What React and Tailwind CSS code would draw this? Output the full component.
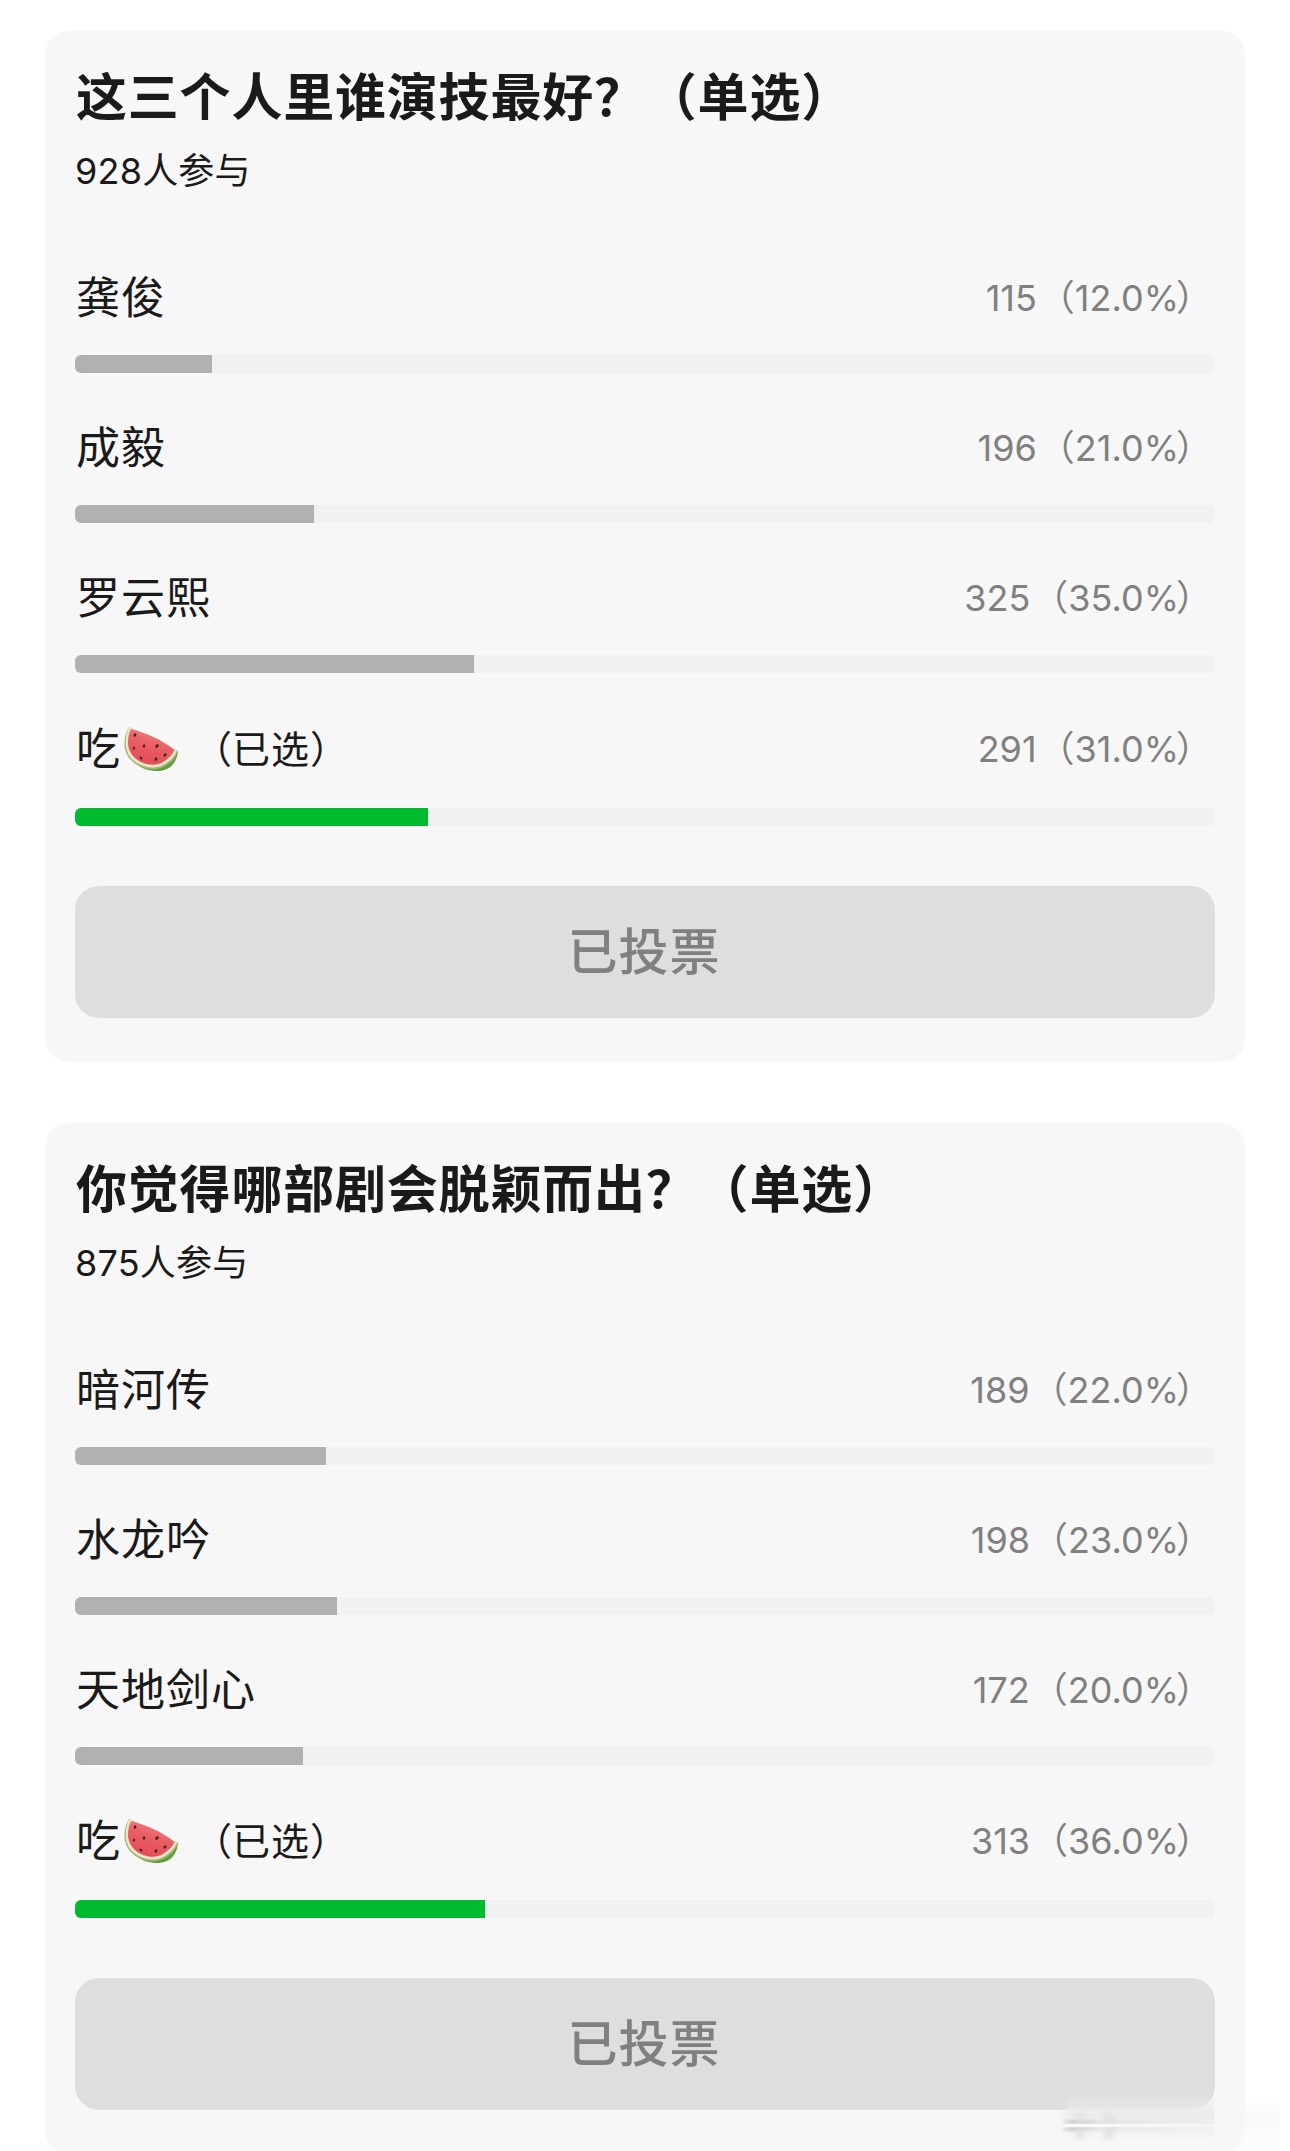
import React from "react";

const polls = [
  {
    title: "这三个人里谁演技最好？（单选）",
    total: 928,
    options: [
      { name: "龚俊", votes: 115, pct: 12 },
      { name: "成毅", votes: 196, pct: 21 },
      { name: "罗云熙", votes: 325, pct: 35 },
      { name: "吃", votes: 291, pct: 31, chosen: true },
    ],
  },
  {
    title: "你觉得哪部剧会脱颖而出？（单选）",
    total: 875,
    options: [
      { name: "暗河传", votes: 189, pct: 22 },
      { name: "水龙吟", votes: 198, pct: 23 },
      { name: "天地剑心", votes: 172, pct: 20 },
      { name: "吃", votes: 313, pct: 36, chosen: true },
    ],
  },
];

function Watermelon() {
  return (
    <svg className="ml-[2px] h-[46px] w-[56px] shrink-0" viewBox="0 0 56 46" aria-label="西瓜">
      <defs>
        <linearGradient id="flesh" x1="0.7" y1="0" x2="0.3" y2="1">
          <stop offset="0" stopColor="#ef8a82" />
          <stop offset="0.4" stopColor="#ea6268" />
          <stop offset="1" stopColor="#e34856" />
        </linearGradient>
      </defs>
      <path d="M50 27 L55 25 C54 37 47 44 36 45 C28 45 20 43 16 40 Z" fill="#5fa036" />
      <path d="M6 1 C-1 13 0 27 9 35 C18 44 34 46 44 39 C50 35 53 31 55 25 Z" fill="#a3b27c" />
      <path d="M6 1 C1 13 1 26 10 34 C19 42 33 44 42 38 C48 34 52 30 54 25 Z" fill="#efe6c6" />
      <path d="M8 3 C3 14 4 25 12 32 C20 39 32 41 40 36 C46 32 49 29 51.500 24 C38 13 23 7 8 3 Z" fill="url(#flesh)" />
      <g fill="#4f2023">
        <ellipse cx="12" cy="9" rx="1.300" ry="1.800" transform="rotate(20 12 9)" />
        <ellipse cx="21" cy="20" rx="1.200" ry="1.800" transform="rotate(10 21 20)" />
        <ellipse cx="34" cy="20" rx="1.400" ry="2.100" transform="rotate(45 34 20)" />
        <ellipse cx="11" cy="22" rx="1.200" ry="1.600" />
        <ellipse cx="18" cy="32" rx="1.300" ry="1.600" transform="rotate(-40 18 32)" />
        <ellipse cx="33" cy="33" rx="1.300" ry="1.800" transform="rotate(20 33 33)" />
        <ellipse cx="42" cy="29" rx="1.400" ry="1.900" transform="rotate(35 42 29)" />
      </g>
    </svg>
  );
}

function Option({ name, votes, pct, chosen }) {
  return (
    <div className={chosen ? "pt-[1px]" : ""}>
      <div className={chosen ? "mb-[16px] flex h-[86px] items-center justify-between" : "mb-[14px] flex h-[86px] items-center justify-between"}>
        <div className="flex items-center pl-px text-[44px] tracking-[1px]">
          <span>{name}</span>
          {chosen && <Watermelon />}
          {chosen && (
            <span className="ml-[15px] flex text-[38px]">
              <span>（</span>
              <span className="-ml-[1px]">已选</span>
              <span>）</span>
            </span>
          )}
        </div>
        <div className="flex pr-[3px] text-[36px] text-[#808080]">
          <span className="mr-[2px]">{votes}</span>
          <span>（{pct.toFixed(1)}%</span>
          <span className="-ml-[3px]">）</span>
        </div>
      </div>
      <div className="h-[18px] overflow-hidden rounded-[6px] bg-[#f1f1f1]">
        <div
          className={chosen ? "h-full bg-[#00bb2d]" : "h-full bg-[#b1b1b1]"}
          style={{ width: `${pct}%` }}
        />
      </div>
    </div>
  );
}

function Poll({ title, total, options }) {
  return (
    <section className="h-[1031px] shrink-0 rounded-[24px] bg-[#f7f7f7] px-[30px] pt-[32px]">
      <h2 className="h-[70px] pl-px text-[51px] leading-[70px] font-bold tracking-[0.8px] whitespace-nowrap">{title}</h2>
      <p className="mt-[13px] h-[49px] text-[36px] leading-[50px] tracking-[0.2px]">{total}人参与</p>
      <div className="mt-[60px] flex flex-col gap-[32px]">
        {options.map((o) => (
          <Option key={o.name} {...o} />
        ))}
      </div>
      <button className="mt-[60px] h-[132px] w-full rounded-[24px] bg-[#dedede] pr-[2px] text-[50px] font-medium tracking-[1px] text-[#808080]">
        已投票
      </button>
    </section>
  );
}

/* Faded streak lying over the lower right corner. */
function Smear() {
  return (
    <div className="absolute right-[10px] bottom-0 flex h-[57px] w-[220px]">
      <div className="relative w-[154px] bg-linear-to-b from-[#e2e2e2]/0 from-0% via-[#ebebeb] via-35% to-[#f7f7f7] to-85% [mask-image:linear-gradient(to_right,transparent,black_12px)]">
        <div className="absolute top-[26px] left-[2px] h-[4px] w-full bg-linear-to-r from-[#c4c4c4] via-[#e4e4e4] via-25% to-[#efefef] blur-[1px]" />
        <div className="absolute top-[33px] left-[2px] h-[4px] w-full bg-linear-to-r from-[#c4c4c4] via-[#e8e8e8] via-25% to-[#f2f2f2] blur-[1px]" />
        <div className="absolute top-[20px] left-[16px] h-[25px] w-[9px] bg-[#dddddd]/60 blur-[2px]" />
        <div className="absolute top-[20px] left-[44px] h-[25px] w-[11px] bg-[#dddddd]/60 blur-[2px]" />
        <div className="absolute top-[30px] left-[2px] h-[3px] w-full bg-linear-to-r from-[#fbfbfb] to-[#f4f4f4]" />
      </div>
      <div className="w-[66px] bg-linear-to-b from-[#f7f7f7]/0 via-[#f7f7f7]/80 via-45% to-[#fafafa]/30" />
    </div>
  );
}

export default function App() {
  return (
    <main className="relative flex h-[2151px] w-[1290px] flex-col gap-[61px] overflow-hidden bg-white px-[45px] pt-[31px] font-['Inter','Noto_Sans_CJK_SC',sans-serif] text-[#1a1a1a] [text-spacing-trim:space-all]">
      {polls.map((p) => (
        <Poll key={p.title} {...p} />
      ))}
      <Smear />
    </main>
  );
}
